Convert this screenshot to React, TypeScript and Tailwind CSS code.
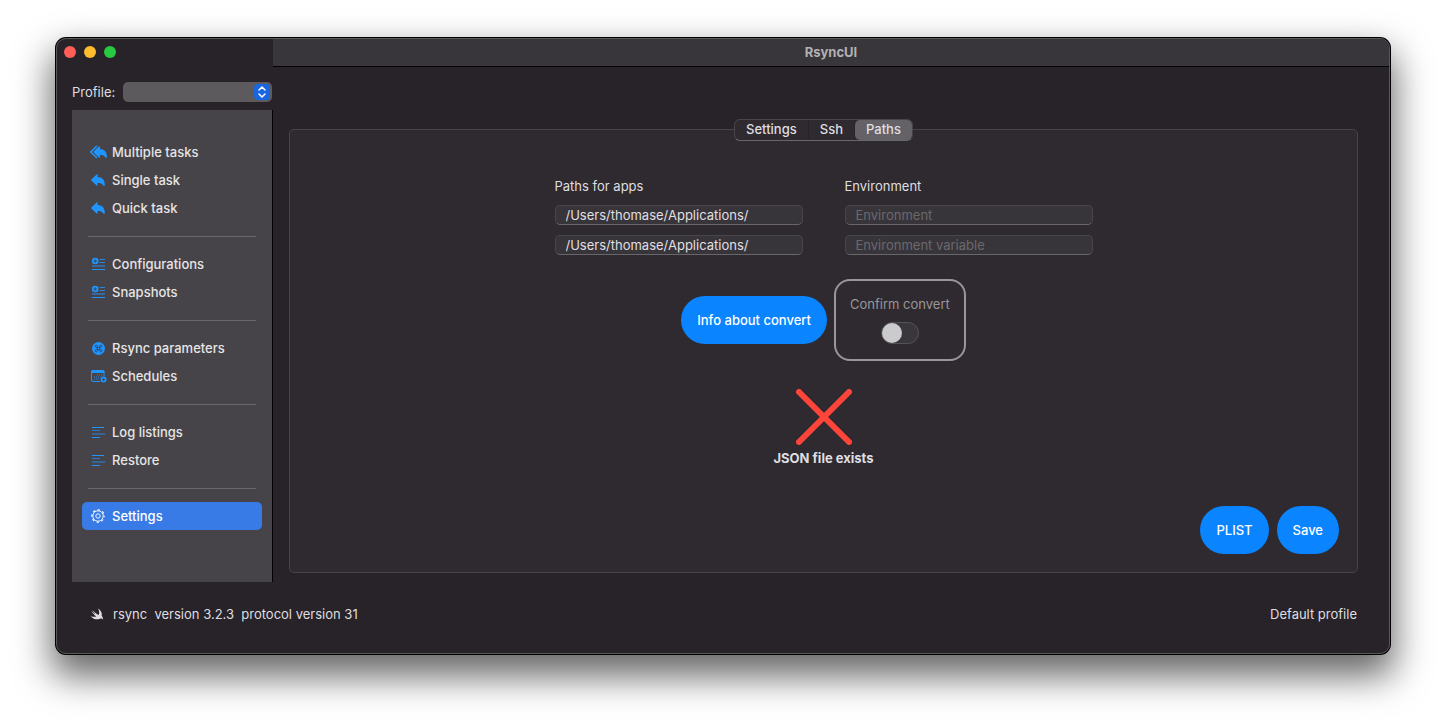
import { useState, type ReactNode } from "react";

function Reply() {
  return (
    <svg className="shrink-0" width="16" height="14" viewBox="0 0 16 14" fill="#1f96ff" aria-hidden="true">
      <path d="M1.300 6.600 6.600 1.400Q7.600.6 7.600 1.900V4C12 4.100 14.800 6.800 14.800 12.100c0 1.100-.9 1.100-1.400.3C12.200 10.500 10.200 9.900 7.600 9.900V12Q7.600 13.300 6.600 12.500L1.300 7.400Q.9 7 1.300 6.600Z" />
    </svg>
  );
}

function ReplyAll() {
  return (
    <svg className="shrink-0" width="18" height="14" viewBox="0 0 18 14" fill="#1f96ff" aria-hidden="true">
      <path d="M4.600 6.600 9.900 1.400Q10.900.6 10.900 1.900V4C15.200 4.100 17.900 6.800 17.900 12.100c0 1.100-.9 1.100-1.400.3C15.300 10.500 13.500 9.900 10.900 9.900V12Q10.900 13.300 9.900 12.500L4.600 7.400Q4.200 7 4.600 6.600Z" />
      <path d="M7.500 1.400 1.700 7l5.800 5.500" fill="none" stroke="#1f96ff" strokeWidth="1.500" strokeLinecap="round" />
    </svg>
  );
}

function ListPlus() {
  return (
    <svg className="shrink-0" width="14" height="14" viewBox="0 0 14 14" fill="none" aria-hidden="true">
      <path d="M8.500 2.500H14M8.500 5.500H14" stroke="#2a84dd" />
      <path d="M1 9h13" stroke="#2a84dd" strokeWidth="1.200" />
      <path d="M1 12.500h13" stroke="#1f96ff" />
      <circle cx="4.200" cy="4" r="3.300" fill="#1f96ff" />
      <path d="M2.400 4H6M4.200 2.200v3.600" stroke="#464448" strokeWidth=".9" />
    </svg>
  );
}

function Command() {
  return (
    <svg className="shrink-0" width="14" height="14" viewBox="0 0 14 14" fill="none" aria-hidden="true">
      <circle cx="7.500" cy="7.500" r="6.500" fill="#1f96ff" />
      <path
        d="M6.300 6.300V5.200A1.100 1.100 0 1 0 5.200 6.300H9.800A1.100 1.100 0 1 0 8.700 5.200V9.800A1.100 1.100 0 1 0 9.800 8.700H5.200A1.100 1.100 0 1 0 6.300 9.800Z"
        stroke="#35435a"
        strokeWidth=".8"
      />
    </svg>
  );
}

function Calendar() {
  return (
    <svg className="shrink-0" width="18" height="14" viewBox="0 0 18 14" fill="none" aria-hidden="true">
      <rect x="2.500" y="1.500" width="12.500" height="11" rx="1.500" stroke="#1f96ff" />
      <path d="M2 4V3a2 2 0 0 1 2-2h9.500a2 2 0 0 1 2 2v1Z" fill="#1f96ff" />
      <path d="M8 6h6M5 8h9M5 10h7" stroke="#2a84dd" strokeDasharray="1 1" />
      <circle cx="14.600" cy="10.600" r="3.700" fill="#464448" />
      <circle cx="14.600" cy="10.600" r="3" fill="#1f96ff" />
      <path d="M13 10.600h3.200M14.600 9v3.200" stroke="#464448" strokeWidth=".9" />
    </svg>
  );
}

function Lines() {
  return (
    <svg className="shrink-0" width="14" height="14" viewBox="0 0 14 14" aria-hidden="true">
      <path d="M1 2.500h12" stroke="#1f96ff" />
      <path d="M1 5.500h8" stroke="#2a78cc" />
      <path d="M1 9h13" stroke="#2a84dd" />
      <path d="M1 12.500h8" stroke="#1f96ff" />
    </svg>
  );
}

function Gear() {
  return (
    <svg className="shrink-0" width="14" height="14" viewBox="0 0 14 14" fill="none" stroke="#fff" aria-hidden="true">
      <circle cx="7" cy="7" r="5.200" strokeWidth=".9" />
      <circle cx="7" cy="7" r="6.200" strokeWidth="1.200" strokeDasharray="2.430 2.440" strokeDashoffset="1.200" />
      <circle cx="7" cy="7" r="2.200" strokeWidth=".9" />
    </svg>
  );
}

function Swift() {
  return (
    <svg width="14" height="12" viewBox="0 0 14 12" fill="#dfdee0" aria-hidden="true">
      <path d="M8 .4c3 2 4.400 4.700 3.600 7.300 1.300 1.500 1.500 2.800 1.200 3.700-.7-1.100-1.800-1.200-2.800-.7-3.200 1.400-7.300.4-9.700-3 2.100 1.300 4.300 1.500 6 .7C4.100 6.700 2.400 4.700 1.200 2.900c1.700 1.500 3.300 2.600 4.200 3.200C4.300 4.900 3.200 3.400 2.300 1.900c2.200 2.200 4.400 4 6.400 5.200C9.600 5 9.300 2.700 8 .4Z" />
    </svg>
  );
}

const groups: { label: string; icon: ReactNode }[][] = [
  [
    { label: "Multiple tasks", icon: <ReplyAll /> },
    { label: "Single task", icon: <Reply /> },
    { label: "Quick task", icon: <Reply /> },
  ],
  [
    { label: "Configurations", icon: <ListPlus /> },
    { label: "Snapshots", icon: <ListPlus /> },
  ],
  [
    { label: "Rsync parameters", icon: <Command /> },
    { label: "Schedules", icon: <Calendar /> },
  ],
  [
    { label: "Log listings", icon: <Lines /> },
    { label: "Restore", icon: <Lines /> },
  ],
  [{ label: "Settings", icon: <Gear /> }],
];

const field =
  "h-5 w-full rounded-[5px] border border-[#49464b] border-b-[#69666b] bg-[#38353a] px-2.5 text-[#e0dfe1] outline-none placeholder:text-[#6b686d]";
const pill = "h-12 rounded-full bg-[#0a84ff] px-4 font-medium text-white";

export default function App() {
  const [tab, setTab] = useState("Paths");
  const [page, setPage] = useState("Settings");

  return (
    <div className="min-h-screen bg-white px-14 pt-[38px] pb-18 font-['Inter',sans-serif] text-[13px] leading-4 text-[#dfdee0]">
      <div className="rounded-[10px] border border-[#5b585c] bg-[#282328] shadow-[0_0_0_1px_#000,0_18px_36px_4px_rgba(0,0,0,0.6)]">
        <header className="flex">
          <div className="flex h-7 w-54 items-center gap-2 pb-0.5 pl-[7px]">
            <button aria-label="Close" className="size-3 rounded-full bg-[#ff5f57]" />
            <button aria-label="Minimize" className="size-3 rounded-full bg-[#febc2e]" />
            <button aria-label="Zoom" className="size-3 rounded-full bg-[#28c840]" />
          </div>
          <h1 className="flex h-7 flex-1 items-center justify-center rounded-tr-[9px] border-b border-black bg-[#38363a] pb-0.5 font-bold text-[#b3b1b4]">
            RsyncUI
          </h1>
        </header>

        <div className="flex pr-[31px] pl-[15px]">
          <div className="w-[201px] pt-[15px]">
            <div className="flex items-center gap-2 pr-px">
              <label htmlFor="profile" className="w-[43px] whitespace-nowrap">
                Profile:
              </label>
              <div className="relative h-5 flex-1">
                <select id="profile" className="h-5 w-full appearance-none rounded-[5px] bg-[#5d5a5e] pr-6 pl-2 outline-none">
                  <option></option>
                </select>
                <span className="pointer-events-none absolute top-0.5 right-0.5 flex size-4 items-center justify-center rounded bg-[#1a66e0]">
                  <svg width="8" height="12" viewBox="0 0 8 12" fill="none" stroke="#fff" strokeWidth="1.500" strokeLinecap="round" strokeLinejoin="round" aria-hidden="true">
                    <path d="M1 4l3-3 3 3M1 8l3 3 3-3" />
                  </svg>
                </span>
              </div>
            </div>
            <nav className="mt-2 border-r border-black bg-[#464448] pt-7 pb-13">
              {groups.map((group, i) => (
                <div key={i}>
                  {i > 0 && (
                    <div className="px-4 py-3.5">
                      <hr className="-mb-px border-[#69676b]" />
                    </div>
                  )}
                  <ul className="px-2.5">
                    {group.map((item) => (
                      <li key={item.label}>
                        <button
                          onClick={() => setPage(item.label)}
                          className={
                            page === item.label
                              ? "flex h-7 w-full items-center gap-1.5 rounded-[5px] bg-[#387be6] pl-2 font-medium text-white"
                              : "flex h-7 w-full items-center gap-1.5 rounded-[5px] pl-2 font-medium text-[#e6e5e6]"
                          }
                        >
                          <span className="flex w-4 justify-center">{item.icon}</span>
                          {item.label}
                        </button>
                      </li>
                    ))}
                  </ul>
                </div>
              ))}
            </nav>
          </div>

          <main className="mt-[62px] mb-[9px] ml-4 flex flex-1 flex-col rounded-[5px] border border-[#47444a] bg-[#2f2a2f]">
            <div role="tablist" className="-mt-[11px] flex self-center rounded-md border border-[#48454a] border-b-[#69666b] bg-[#2f2a2f] font-medium">
              {["Settings", "Ssh", "Paths"].map((name) => (
                <button
                  key={name}
                  role="tab"
                  aria-selected={tab === name}
                  onClick={() => setTab(name)}
                  className={
                    tab === name
                      ? "h-5 rounded-[5px] bg-[#656267] px-[11px] pb-0.5"
                      : "h-5 border-r border-[#29242a] px-[11px] pb-0.5 first:rounded-l-[5px]"
                  }
                >
                  {name}
                </button>
              ))}
            </div>

            <div className="mt-[37px] flex justify-center gap-[42px]">
              <div className="w-62 space-y-2.5">
                <h2 className="pb-px">Paths for apps</h2>
                <input aria-label="Applications path" className={field} defaultValue="/Users/thomase/Applications/" />
                <input aria-label="Schedule applications path" className={field} defaultValue="/Users/thomase/Applications/" />
              </div>
              <div className="w-62 space-y-2.5">
                <h2 className="pb-px">Environment</h2>
                <input aria-label="Environment" className={field} placeholder="Environment" />
                <input aria-label="Environment variable" className={field} placeholder="Environment variable" />
              </div>
            </div>

            <div className="mt-6 flex items-center justify-center gap-[7px]">
              <button className={pill}>Info about convert</button>
              <label className="flex h-[82px] flex-col items-center rounded-2xl border-2 border-[#98969a] px-3.5 pt-[15px] text-[#98969a]">
                Confirm convert
                <input
                  type="checkbox"
                  className="mt-2.5 h-[22px] w-[38px] appearance-none rounded-full border border-[#555257] bg-[#3a373c] before:block before:size-5 before:rounded-full before:bg-[#cbcacc] checked:bg-[#0a84ff] checked:pl-4"
                />
              </label>
            </div>

            <div className="mt-7 flex flex-col items-center">
              <svg width="56" height="56" viewBox="0 0 56 56" fill="none" stroke="#ff453a" strokeWidth="6" strokeLinecap="round" aria-hidden="true">
                <path d="M3 3l50 50M53 3L3 53" />
              </svg>
              <p className="mt-[5px] font-bold">JSON file exists</p>
            </div>

            <div className="mt-auto flex justify-end gap-2 p-[18px]">
              <button className={pill}>PLIST</button>
              <button className={pill}>Save</button>
            </div>
          </main>
        </div>

        <footer className="flex items-center justify-between pt-6 pr-8 pb-[31px] pl-[33px]">
          <div className="flex items-center gap-[9px]">
            <Swift />
            <span className="whitespace-pre">rsync  version 3.2.3  protocol version 31</span>
          </div>
          <span>Default profile</span>
        </footer>
      </div>
    </div>
  );
}
